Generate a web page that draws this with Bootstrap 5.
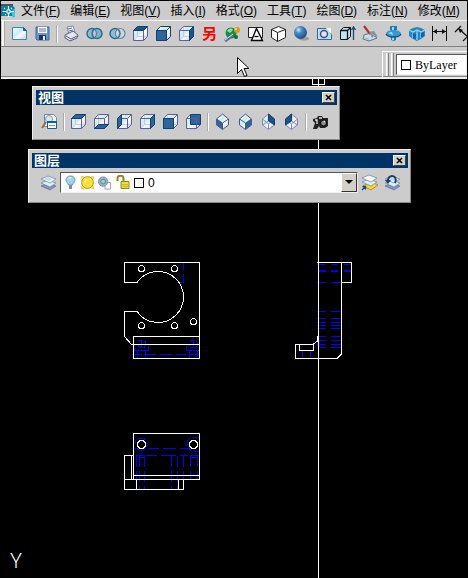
<!DOCTYPE html>
<html lang="zh-CN">
<head>
<meta charset="utf-8">
<meta name="viewport" content="width=device-width, initial-scale=1">
<title>CAD</title>
<link href="https://cdn.jsdelivr.net/npm/bootstrap@5.3.0/dist/css/bootstrap.min.css" rel="stylesheet">
<style>
:root { --face: #cccccc; --shade: #808080; --title: #003366; }
body { background: #000; color: #000; font: 12px/18px "Liberation Sans", "Noto Sans CJK SC", sans-serif; }
svg { display: block; }
.app-bars { border: 1px solid #000; border-bottom: 0; }
.bar-face { background: var(--face); }
.menu-row { height: 20px; gap: 10px; border-bottom: 1px solid #f4f4f4; }
.menu-row .btn { font: inherit; line-height: 18px; color: #000; border: 0; }
.menu-row .app-logo { width: 16px; margin-right: -6px; }
.tool-row { height: 26px; padding-left: 6px; border-bottom: 1px solid var(--shade); }
.main-tools { border-left: 2px solid #f4f4f4; padding-left: 4px; margin-left: -5px; box-shadow: inset 1px 0 #aaa; }
.prop-row { height: 32px; border-bottom: 2px solid #eee; box-shadow: inset 0 -1px var(--shade); }
.tool-btn { width: 23px; height: 22px; padding: 0; border: 0; border-radius: 0; flex: none; display: flex; align-items: center; justify-content: center; }
.tool-btn svg { width: 17px; height: 17px; }
.tool-gap { width: 6px; height: 18px; flex: none; display: flex; justify-content: center; }
.tool-gap::before { content: ""; width: 2px; background: #fff; border-left: 1px solid #aaa; }
.red-glyph { color: #f00; font-size: 15px; line-height: 18px; font-weight: 700; }
.prop-panel { width: 85px; height: 28px; padding: 0 0 2px 3px; border: solid #fff; border-width: 1px 0 0 1px; gap: 2px; }
.grip { width: 3px; height: 23px; background: #ddd; border-right: 1px solid var(--shade); border-left: 1px solid #fff; }
.combo { background: #fff; border: 1px solid #555; border-right-color: #eee; border-bottom-color: #eee; height: 21px; min-width: 0; }
.combo select { appearance: none; border: 0; background: #fff; color: #000; padding: 0; min-width: 0; outline-offset: -1px; font-size: 12px; }
.combo .serif-pick { font-family: "Liberation Serif", serif; }
.swatch { width: 10px; height: 10px; border: 1px solid #000; background: #fff; flex: none; }
.floatbar { position: absolute; background: var(--face); border: 1px solid; border-color: #eee #888 #888 #eee; height: 54px; padding: 3px 2px 3px 3px; }
.bar-view { left: 32px; top: 7px; width: 308px; }
.bar-layer { left: 28px; top: 70px; width: 383px; }
.bar-title { background: var(--title); color: #fff; height: 15px; padding-left: 2px; }
.bar-title h2 { font-size: 13px; line-height: 15px; font-weight: 700; }
.close-box { width: 13px; height: 11px; padding: 0; border: 1px solid; border-color: #fff #444 #444 #fff; background: #d4d0c8; margin-right: 2px; display: flex; align-items: center; justify-content: center; }
.drop-box { width: 16px; height: 19px; padding: 0; border: 1px solid; border-color: #fff #333 #333 #fff; background: #d4d0c8; display: flex; align-items: center; justify-content: center; flex: none; }
.bar-view .bar-body { height: 33px; padding-left: 2px; }
.bar-layer .bar-body { height: 29px; padding-left: 5px; }
.layer-pick { gap: 4px; padding-left: 3px; }
.model { min-height: 499px; }
.drawing { width: 100%; height: 100%; position: absolute; inset: 0; }
.ucs { font-family: Roboto, sans-serif; font-weight: 300; font-size: 20px; fill: #fff; }
.pointer { position: absolute; left: 236px; top: 56px; }
</style>
<script src="https://cdn.jsdelivr.net/npm/bootstrap@5.3.0/dist/js/bootstrap.bundle.min.js"></script>
</head>
<body class="d-flex flex-column min-vh-100 overflow-hidden position-relative">
<svg width="0" height="0" class="position-absolute" aria-hidden="true">
  <defs>
    <linearGradient id="glass" x1="0" y1="0" x2="1" y2="1"><stop offset="0" stop-color="#fff"/><stop offset=".4" stop-color="#c9eceb"/><stop offset=".6" stop-color="#f8f8ff"/><stop offset="1" stop-color="#cbc9ee"/></linearGradient>
    <radialGradient id="ball" cx=".35" cy=".3" r=".7"><stop offset="0" stop-color="#d4eefa"/><stop offset=".35" stop-color="#4a8fc8"/><stop offset="1" stop-color="#1d4f86"/></radialGradient>
    <symbol id="cube" viewBox="0 0 17 17"><path d="M1.500 5.500l4-4h10v10l-4 4h-10z" fill="url(#glass)"/></symbol>
    <symbol id="cubeLines" viewBox="0 0 17 17"><path d="M5.500 1.500v10h10M5.500 11.500l-4 4" fill="none" stroke="#c3c0e0" stroke-width=".8"/><path d="M1.500 5.500l4-4h10v10l-4 4h-10zM1.500 5.500h10v10M11.500 5.500l4-4" fill="none" stroke="#5d609c"/></symbol>
    <symbol id="gem" viewBox="0 0 17 17"><path d="M8.500 1l6 5v6l-6 4.500-6-4.500V6z" fill="url(#glass)"/></symbol>
    <symbol id="layers" viewBox="0 0 17 17"><path d="M1 12l7-3 8 3-6 4z" fill="#8494bd" stroke="#5e6b94" stroke-width=".7"/><path d="M1 9l7-3 8 3-6 4z" fill="#d9f1f1" stroke="#60899b" stroke-width=".7"/><path d="M1 5l7-3 8 3-6 4z" fill="#f3fbff" stroke="#7888b2" stroke-width=".8"/><path d="M4 5l4-2 4 2-3 2z" fill="#b9dfe5"/></symbol>
  </defs>
</svg>

<header class="app-bars overflow-hidden">
  <nav class="menu-row bar-face d-flex align-items-center text-nowrap" aria-label="菜单">
    <svg class="app-logo flex-shrink-0" height="16" viewBox="0 0 16 16"><path d="M0 2h11l3 3v9l-3-1H0z" fill="#0083a8"/><path d="M0 1h12v2H0z" fill="#4a5262"/><path d="M10 9l4-4v8l-2 2z" fill="#46c7dc"/><path d="M1.500 8.500h4M9 8.500h4M7.500 3v4M7.500 10v4M3 5l1 1M11 5l-1 1M4 12l1-1" stroke="#fff" stroke-width="1.200"/><path d="M6 7h3v3H6z" fill="none" stroke="#fff"/></svg>
    <button class="btn p-0">文件(<u>F</u>)</button>
    <button class="btn p-0">编辑(<u>E</u>)</button>
    <button class="btn p-0">视图(<u>V</u>)</button>
    <button class="btn p-0">插入(<u>I</u>)</button>
    <button class="btn p-0">格式(<u>O</u>)</button>
    <button class="btn p-0">工具(<u>T</u>)</button>
    <button class="btn p-0">绘图(<u>D</u>)</button>
    <button class="btn p-0">标注(<u>N</u>)</button>
    <button class="btn p-0">修改(<u>M</u>)</button>
  </nav>
  <div class="tool-row bar-face">
    <div class="main-tools d-flex align-items-center h-100" role="toolbar" aria-label="标准">
      <button class="btn tool-btn" aria-label="新建"><svg viewBox="0 0 17 17"><path d="M1.500 2.500h11l3 3v9h-14z" fill="url(#glass)" stroke="#3f88a8"/><path d="M12.500 2.500v3h3z" fill="#0c6b99" stroke="#0c6b99"/></svg></button>
      <button class="btn tool-btn" aria-label="保存"><svg viewBox="0 0 17 17"><path d="M2 2h13v13H3l-1-1z" fill="#7192cf" stroke="#44639f"/><path d="M4 2h9v6H4z" fill="#f2f6ff"/><path d="M5 4h7M5 6h7" stroke="#779"/><path d="M5 10h7v5H5z" fill="#17366f"/><path d="M9 11h2v4H9z" fill="#dff"/></svg></button>
      <span class="tool-gap"></span>
      <button class="btn tool-btn" aria-label="打印"><svg viewBox="0 0 17 17"><path d="M4 2l6-1 2 6-6 2z" fill="#fff" stroke="#8187a4"/><path d="M2 10l8-4 5 4-1 3-7 3-5-3z" fill="#e6e6f3" stroke="#555b78"/><path d="M3 11l5 3 6-3" fill="none" stroke="#555b78"/><path d="M5 4l4-1M6 6l4-1" stroke="#567"/></svg></button>
      <button class="btn tool-btn" aria-label="并集"><svg viewBox="0 0 17 17"><circle cx="6" cy="8.500" r="5" fill="#8fbecb" stroke="#286b86" stroke-width="1.400"/><circle cx="11" cy="8.500" r="5" fill="#7fb2c2" stroke="#286b86" stroke-width="1.400"/><path d="M8.500 4.500a5 5 0 0 0 0 8 5 5 0 0 0 0-8z" fill="#cbd" stroke="#377892"/></svg></button>
      <button class="btn tool-btn" aria-label="差集"><svg viewBox="0 0 17 17"><circle cx="11" cy="8.500" r="5" fill="#d5d5d8" stroke="#5d8fa2" stroke-width="1.200"/><circle cx="6" cy="8.500" r="5" fill="#8fbecb" stroke="#286b86" stroke-width="1.400"/><path d="M8.500 4.500a5 5 0 0 0 0 8 5 5 0 0 0 0-8z" fill="#dcd8e6" stroke="#377892"/></svg></button>
      <button class="btn tool-btn" aria-label="俯视"><svg viewBox="0 0 17 17"><use href="#cube"/><use href="#cubeLines"/><path d="M1.500 5.500l4-4h10l-4 4z" fill="#1d5488" stroke="#123f70"/></svg></button>
      <button class="btn tool-btn" aria-label="主视"><svg viewBox="0 0 17 17"><use href="#cube"/><path d="M1.500 5.500h10v10h-10z" fill="#2c659b"/><path d="M1.500 5.500l4-4h10v10l-4 4h-10zM1.500 5.500h10v10M11.500 5.500l4-4" fill="none" stroke="#123f70"/></svg></button>
      <button class="btn tool-btn" aria-label="右视"><svg viewBox="0 0 17 17"><use href="#cube"/><use href="#cubeLines"/><path d="M11.500 5.500l4-4v10l-4 4z" fill="#1d5488" stroke="#123f70"/></svg></button>
      <button class="btn tool-btn red-glyph">另</button>
      <button class="btn tool-btn" aria-label="动态观察"><svg viewBox="0 0 17 17"><circle cx="7" cy="8" r="5.500" fill="#168a48"/><path d="M3 6c2-3 5-3 6-1l-3 3z" fill="#7fe3a3"/><path d="M1 16l8-6" stroke="#5a6d91" stroke-width="3"/><path d="M1 15l8-6" stroke="#dfe6f6"/><circle cx="13" cy="5" r="3" fill="#d99a1b"/><circle cx="12" cy="4" r="1" fill="#ffe680"/><circle cx="12" cy="12" r="2" fill="#0d6c37"/></svg></button>
      <button class="btn tool-btn" aria-label="区域"><svg viewBox="0 0 17 17"><path d="M1.500 2.500h14v10h-14z" fill="#fff" stroke="#222"/><path d="M9.500 3.500l6 12h-11z" fill="#fff" stroke="#000" stroke-width="1.400"/><path d="M7.500 11.500h4" stroke="#000" stroke-width="1.300"/></svg></button>
      <button class="btn tool-btn" aria-label="长方体"><svg viewBox="0 0 17 17"><path d="M1.500 4.500l7-3 7 3v8l-8 4-6-4z" fill="#fff" stroke="#222"/><path d="M1.500 4.500l6 3 8-3M7.500 7.500v9" fill="none" stroke="#222"/></svg></button>
      <button class="btn tool-btn" aria-label="球体"><svg viewBox="0 0 17 17"><ellipse cx="11" cy="13.500" rx="5" ry="2" fill="#9c9c9c"/><circle cx="7.500" cy="7.500" r="6.500" fill="url(#ball)"/></svg></button>
      <button class="btn tool-btn" aria-label="剖切"><svg viewBox="0 0 17 17"><path d="M1.500 3.500h10l4 6v5h-14z" fill="#b9e0f2" stroke="#336b9b"/><path d="M10 3h5v6z" fill="#edf7ff"/><circle cx="8" cy="9" r="3.500" fill="#e6e2f5" stroke="#454f80" stroke-width="1.500"/></svg></button>
      <button class="btn tool-btn" aria-label="拉伸面"><svg viewBox="0 0 17 17"><path d="M1.500 5.500l3-3h7v9l-3 3h-7z" fill="#c2e1f4" stroke="#111"/><path d="M1.500 5.500h7v9M8.500 5.500l3-3" fill="none" stroke="#111" stroke-width="1.300"/><path d="M14.500 15V3M12.500 5l2-3 2 3" fill="none" stroke="#144b82" stroke-width="1.300"/></svg></button>
      <button class="btn tool-btn" aria-label="清理"><svg viewBox="0 0 17 17"><path d="M2 10l6-2 7 5-8 3-6-2z" fill="#c3dff0" stroke="#5c7695"/><path d="M2 1l6 8" stroke="#a33b25" stroke-width="2.200"/><path d="M7 7l5-1 4 6-4-1-2 2z" fill="#7f8fa8"/><path d="M9 8l4 3M3 13l4 1" stroke="#d8a55d"/></svg></button>
      <button class="btn tool-btn" aria-label="三维旋转"><svg viewBox="0 0 17 17"><path d="M5 1h7v4H5zM6 1h5v14l-2 1-3-1z" fill="#237bb5"/><path d="M8 2v13" stroke="#9ddaf1" stroke-width="2"/><ellipse cx="8.500" cy="8.500" rx="7.500" ry="3.500" fill="#2e9bd5"/><path d="M3 8l4-1 1 3z" fill="#afe1f7"/><path d="M1 9c2 4 13 4 15 0" fill="none" stroke="#154c80" stroke-width="1.300"/></svg></button>
      <button class="btn tool-btn" aria-label="阵列"><svg viewBox="0 0 17 17"><path d="M1 5l4-2 4-1 4 1 4 2v6l-4 3-4 2-4-2-4-3z" fill="#2487c5"/><path d="M1 5l4 2 4-2 4 2 4-2M5 7v6M9 5v10M13 7v6" fill="none" stroke="#8fd4f3" stroke-width="1.300"/><path d="M5 8l3 1v5l-3-1zM13 8l3-1v4l-3 2z" fill="#17649f"/></svg></button>
      <button class="btn tool-btn" aria-label="线性标注"><svg viewBox="0 0 17 17"><path d="M1.500 1v15M15.500 1v15M2 6.500h13" stroke="#111"/><path d="M2 6.500L6 4v5zM15 6.500L11 4v5z" fill="#111"/></svg></button>
      <button class="btn tool-btn" aria-label="对齐标注"><svg viewBox="0 0 17 17"><path d="M1 7l6-6M9 16l6-6M5 4l9 8" stroke="#111" stroke-width="1.200"/><path d="M4 3l5 2-3 3z" fill="#111"/></svg></button>
    </div>
  </div>
  <div class="prop-row bar-face d-flex justify-content-end align-items-start pt-1">
    <div class="prop-panel d-flex align-items-center">
      <span class="grip"></span><span class="grip"></span>
      <div class="combo d-flex align-items-center flex-grow-1 ps-1">
        <span class="swatch"></span>
        <select class="serif-pick flex-grow-1 ms-1" aria-label="颜色"><option>ByLayer</option></select>
      </div>
    </div>
  </div>
</header>

<main class="model flex-grow-1 position-relative">
  <svg class="drawing" role="img" aria-label="三视图">
    <g transform="translate(0 -79)" fill="none" shape-rendering="crispEdges">
      <!-- hidden edges -->
      <g stroke="#0000ff">
        <path d="M183.500 262v8M183.500 274v8M178 282.500h6"/>
        <path d="M132 354.500h10M146 354.500h10M160 354.500h12M176 354.500h10M190 354.500h10"/>
        <path d="M134.500 344v6h14v-6M137.500 350v8M145.500 350v8M186.500 344v6h13M189.500 350v8M197.500 350v8"/>
        <circle cx="142" cy="344" r="4" stroke-dasharray="5 2"/><circle cx="193.500" cy="344" r="4" stroke-dasharray="5 2"/>
        <path d="M141.500 340v8M193.500 340v8"/>
        <path d="M317 264.500h1M319 264.500h7M331 264.500h7M344 264.500h8M317 282.500h9M331 282.500h10"/>
        <path d="M319 271h7M331 271h7M344 271h8" stroke-width="2"/>
        <path d="M317 311.500h9M331 311.500h10M317 318.500h9M331 318.500h10M317 322.500h9M331 322.500h10M317 325.500h9M331 325.500h10M317 328.500h9M331 328.500h10M317 336.500h9M331 336.500h10M319 340.500h7M331 340.500h10M317 344.500h9M331 344.500h10M319 347.500h7M331 347.500h10"/>
        <path d="M317.500 336v10M319.500 340v8M302.500 350v8M310.500 350v8"/>
        <path d="M135 444v-3l3-3h5l3 2M147 443v3l-3 4h-5l-3-2M133 448.500h4M148 448.500h11M163 448.500h13M180 448.500h8M187 446v-5l4-4M194 437.500h5M188 447l3 4M193 451.500h6"/>
        <path d="M136 455.500h9M147 455.500h10M161 455.500h15M180 455.500h8M190 455.500h10M139 457.500h6M190 457.500h8"/>
        <path stroke-dasharray="11 4" d="M136.500 456v33M139.500 456v33M144.500 456v33M171.500 456v33M177.500 456v33M183.500 456v33M190.500 456v23M197.500 456v23"/>
      </g>
      <!-- visible edges -->
      <g stroke="#ffffff">
        <path d="M318.500 79v499"/>
        <path d="M312.500 79v5h12v-5"/>
        <path d="M137 282.500h-12.500v-20h75v96h-66v-22h66M137 311.500h-12.500v25l7 8h68"/>
        <path d="M137 282.500a25.500 25.500 0 1 1 0 29"/>
        <path d="M136 344h12M188 344h11"/>
        <g><circle cx="141.500" cy="268.500" r="3"/><circle cx="174.500" cy="268.500" r="3"/><circle cx="141.500" cy="325.500" r="3"/><circle cx="174.500" cy="325.500" r="3"/><circle cx="193.500" cy="321.500" r="3"/></g>
        <path d="M317 262.500h34.500v20h-10M341.500 262v92l-4 4h-42v-14h18l4-3v-5M299.500 344v6h14v-6"/>
        <path d="M133.500 433.500h66v46h-66zM133 475.500h66M133 455.500h-8.500v34h59v-10M131.500 455v24M124 479.500h10M136.500 479v10M178.500 479v10"/>
        <g stroke-width="1.500"><circle cx="141.500" cy="444.500" r="4"/><circle cx="193.500" cy="444.500" r="4"/></g>
      </g>
    </g>
    <text class="ucs" x="10" y="489">Y</text>
  </svg>

  <section class="floatbar bar-view">
    <div class="bar-title d-flex align-items-center justify-content-between"><h2 class="m-0">视图</h2>
      <button class="close-box" aria-label="关闭"><svg width="7" height="7" viewBox="0 0 7 7"><path d="M1 1l5 5M6 1L1 6" stroke="#000" stroke-width="1.600"/></svg></button></div>
    <div class="bar-body d-flex align-items-center" role="toolbar" aria-label="视图">
      <button class="btn tool-btn" aria-label="命名视图"><svg viewBox="0 0 17 17"><path d="M3.500 1.500h9l3 3v9h-12z" fill="#eef6fb" stroke="#5c90b0"/><circle cx="8" cy="6" r="3.500" fill="#d5e8f4" stroke="#999"/><path d="M1 15l4-6" stroke="#a76533" stroke-width="2"/><path d="M6.500 8.500h9v7h-9z" fill="#fff" stroke="#126191"/><path d="M6 8h10v2H6z" fill="#126191"/><path d="M8 12.500h6" stroke="#679fbe"/></svg></button>
      <span class="tool-gap"></span>
      <button class="btn tool-btn" aria-label="俯视"><svg viewBox="0 0 17 17"><use href="#cube"/><use href="#cubeLines"/><path d="M1.500 5.500l4-4h10l-4 4z" fill="#2c659b" stroke="#123f70"/></svg></button>
      <button class="btn tool-btn" aria-label="仰视"><svg viewBox="0 0 17 17"><use href="#cube"/><use href="#cubeLines"/><path d="M1.500 15.500l4-4h10l-4 4z" fill="#2c659b" stroke="#123f70"/></svg></button>
      <button class="btn tool-btn" aria-label="左视"><svg viewBox="0 0 17 17"><use href="#cube"/><use href="#cubeLines"/><path d="M1.500 5.500l4-4v10l-4 4z" fill="#2c659b" stroke="#123f70"/></svg></button>
      <button class="btn tool-btn" aria-label="右视"><svg viewBox="0 0 17 17"><use href="#cube"/><use href="#cubeLines"/><path d="M11.500 5.500l4-4v10l-4 4z" fill="#2c659b" stroke="#123f70"/></svg></button>
      <button class="btn tool-btn" aria-label="主视"><svg viewBox="0 0 17 17"><use href="#cube"/><use href="#cubeLines"/><path d="M1.500 5.500h10v10h-10z" fill="#2c659b" stroke="#123f70"/></svg></button>
      <button class="btn tool-btn" aria-label="后视"><svg viewBox="0 0 17 17"><use href="#cube"/><path d="M5.500 1.500h10v10h-10z" fill="#2c659b" stroke="#123f70"/><path d="M1.500 5.500h10v10h-10zM1.500 5.500l4-4M11.500 5.500l4-4M11.500 15.500l4-4" fill="none" stroke="#5d609c"/></svg></button>
      <span class="tool-gap"></span>
      <button class="btn tool-btn" aria-label="西南等轴测"><svg viewBox="0 0 17 17"><use href="#gem"/><path d="M2.500 6l6 4v6.500l-6-4.500z" fill="#2c659b"/><path d="M8.500 1l6 5v6l-6 4.500-6-4.500V6zM2.500 6l6 4 6-4M8.500 10v6" fill="none" stroke="#47598e"/></svg></button>
      <button class="btn tool-btn" aria-label="东南等轴测"><svg viewBox="0 0 17 17"><use href="#gem"/><path d="M14.500 6l-6 4v6.500l6-4.500z" fill="#2c659b"/><path d="M8.500 1l6 5v6l-6 4.500-6-4.500V6zM2.500 6l6 4 6-4M8.500 10v6" fill="none" stroke="#47598e"/></svg></button>
      <button class="btn tool-btn" aria-label="东北等轴测"><svg viewBox="0 0 17 17"><use href="#gem"/><path d="M8.500 1l6 5v6l-6 4.500-6-4.500V6zM8.500 8l-6 4M2.500 6l6 5 6-5M8.500 11v5" fill="none" stroke="#8587b8"/><path d="M8.500 1l6 5v6l-6-4z" fill="#1d5488" stroke="#123f70"/></svg></button>
      <button class="btn tool-btn" aria-label="西北等轴测"><svg viewBox="0 0 17 17"><use href="#gem"/><path d="M8.500 1l6 5v6l-6 4.500-6-4.500V6zM8.500 8l6 4M2.500 6l6 5 6-5M8.500 11v5" fill="none" stroke="#8587b8"/><path d="M8.500 1l-6 5v6l6-4z" fill="#1d5488" stroke="#123f70"/></svg></button>
      <span class="tool-gap"></span>
      <button class="btn tool-btn" aria-label="相机"><svg viewBox="0 0 17 17"><path d="M1 6l4-1 1-2h4l1 2h5v8l-3 2H8l-1-2-2 3H1l2-6-2-2z" fill="#222"/><circle cx="11.500" cy="10" r="3" fill="#8a8a8a" stroke="#000"/><path d="M3 7l2 0v4M7 5h3M12 9l1-1" fill="none" stroke="#e5e5dc" stroke-width="1.300"/></svg></button>
    </div>
  </section>

  <section class="floatbar bar-layer">
    <div class="bar-title d-flex align-items-center justify-content-between"><h2 class="m-0">图层</h2>
      <button class="close-box" aria-label="关闭"><svg width="7" height="7" viewBox="0 0 7 7"><path d="M1 1l5 5M6 1L1 6" stroke="#000" stroke-width="1.600"/></svg></button></div>
    <div class="bar-body d-flex align-items-center" role="toolbar" aria-label="图层">
      <button class="btn tool-btn" aria-label="图层特性"><svg><use href="#layers"/></svg></button>
      <div class="combo layer-pick d-flex align-items-center flex-grow-1">
        <svg class="flex-shrink-0" width="13" height="15" viewBox="0 0 13 15"><path d="M6.500 1C3.500 1 2 3 2 5c0 2 2 3 2.500 5h4C9 8 11 7 11 5c0-2-1.500-4-4.500-4z" fill="#9fd5ea" stroke="#6c93b8"/><path d="M4.500 3.500c1-1 2-1 3-.5" fill="none" stroke="#fff" stroke-width="1.300"/><path d="M5 10h3v4H5z" fill="#8a84a0"/></svg>
        <svg class="flex-shrink-0" width="13" height="13" viewBox="0 0 14 14"><path d="M0 0h3v3H0zM11 0h3v3h-3zM0 11h3v3H0zM11 11h3v3h-3z" fill="#f3d552"/><circle cx="7" cy="7" r="6.300" fill="#ffe22b" stroke="#a58a2b"/><path d="M4 4l4-1-5 5z" fill="#fff7a0"/></svg>
        <svg class="flex-shrink-0" width="14" height="14" viewBox="0 0 15 14"><path d="M7.500 6.500h6v7h-6z" fill="#fff" stroke="#999"/><circle cx="5.500" cy="5.500" r="5" fill="#8bb7cf" stroke="#7f8fbc"/><circle cx="5.500" cy="5.500" r="2.500" fill="#c1cc88" stroke="#5384a5"/></svg>
        <svg class="flex-shrink-0" width="14" height="15" viewBox="0 0 14 15"><path d="M1.500 6V3c0-3 6-3 6 0v4" fill="none" stroke="#8c8a24" stroke-width="2"/><path d="M5 6.500h8v7H5z" fill="#ece32e" stroke="#8c8a24"/><path d="M6 9.500h6M6 11.500h6" stroke="#a6a12b" stroke-width=".6"/></svg>
        <span class="swatch"></span>
        <select class="flex-grow-1" aria-label="图层"><option>0</option></select>
        <button class="drop-box" aria-label="展开"><svg width="8" height="5" viewBox="0 0 8 5"><path d="M0 0h8L4 4z" fill="#000"/></svg></button>
      </div>
      <button class="btn tool-btn" aria-label="置为当前"><svg viewBox="0 0 17 17"><path d="M2 12l8-4 7 3-7 5z" fill="#ffd329" stroke="#9e7a11" stroke-width=".7"/><path d="M1 8l7-3 8 3-6 4z" fill="#d9f1f1" stroke="#60899b" stroke-width=".7"/><path d="M1 4l7-3 8 3-6 4z" fill="#f3fbff" stroke="#7888b2" stroke-width=".8"/><path d="M1 16l3-3M1.500 12.500h3v3" fill="none" stroke="#144b82" stroke-width="1.300"/></svg></button>
      <button class="btn tool-btn me-1" aria-label="上一个图层"><svg viewBox="0 0 17 17"><use href="#layers"/><path d="M11 9c2-4 0-7-3-7-2 0-4 2-4 4" fill="none" stroke="#173d70" stroke-width="2"/><path d="M1 6h6l-3 4z" fill="#173d70"/></svg></button>
    </div>
  </section>
</main>
<svg class="pointer" width="14" height="22" viewBox="0 0 14 22" aria-hidden="true"><path d="M1.500 1.500v16l4-4 3 7 2.500-1-3-7h5z" fill="#fff" stroke="#000"/></svg>
</body>
</html>
